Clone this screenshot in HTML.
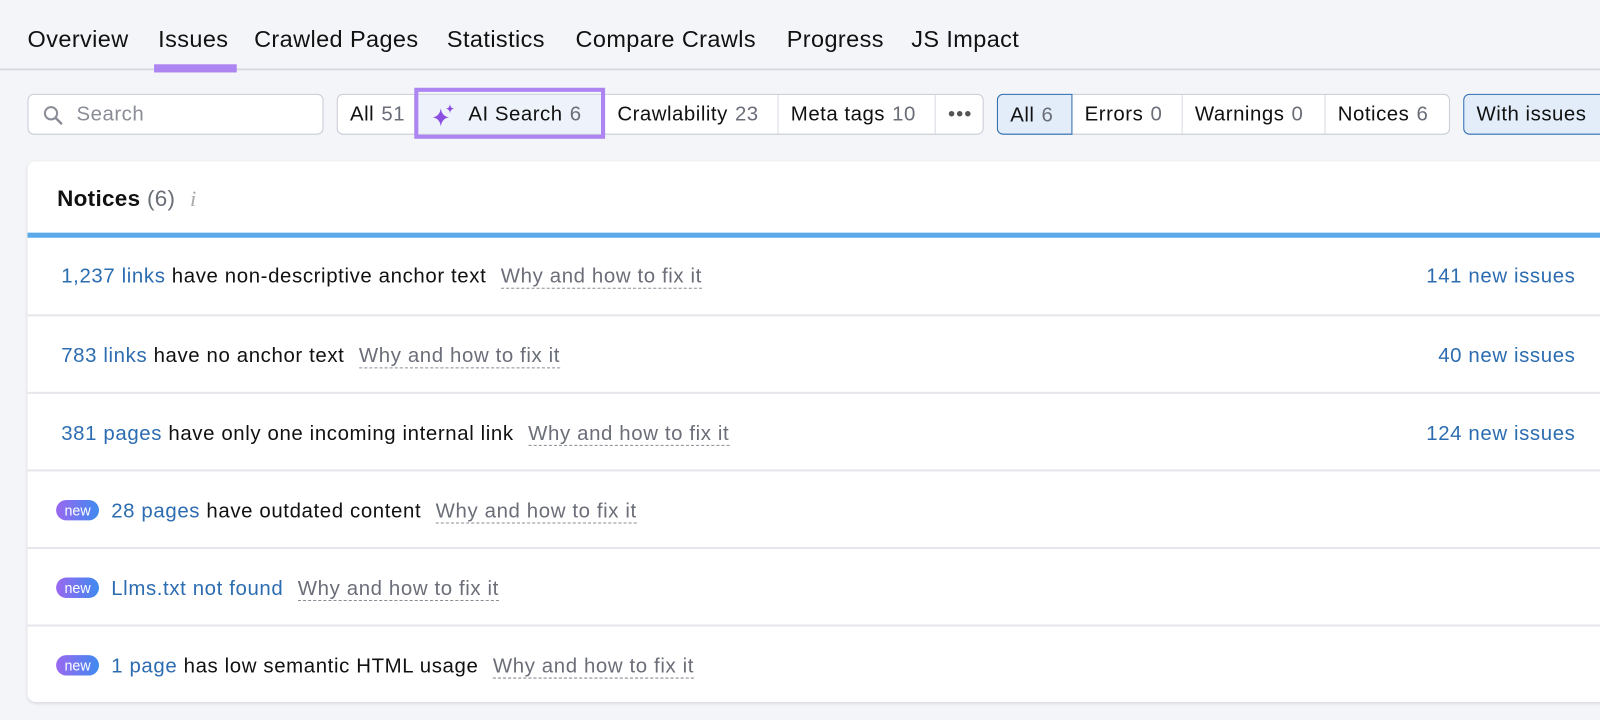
<!DOCTYPE html>
<html><head><style>
*{box-sizing:border-box;margin:0;padding:0}
body{width:1600px;height:720px;background:#f4f5f9;font-family:"Liberation Sans",sans-serif;color:#111;overflow:hidden}
#w{position:relative;width:1568px;height:706px;transform:scale(1.0204);transform-origin:0 0}
.tabs{position:absolute;top:25px;left:27px;font-size:23px;letter-spacing:.4px;white-space:nowrap}
.tabs span{position:absolute;top:0}
.line{position:absolute;top:67px;left:0;width:1600px;height:2px;background:#d8dae2}
.ul{position:absolute;top:63px;left:151px;width:81px;height:8px;background:#ad85f2}
.box{position:absolute;top:92px;height:40px;background:#fff;border:1px solid #c9ccd6;border-radius:6px;font-size:20px;letter-spacing:.5px}
.seg{position:absolute;top:0;height:38px;line-height:38px;padding:0 12px;border-right:1px solid #d8dae2;white-space:nowrap}
.n{color:#6b6e78;margin-left:7px}
.card{position:absolute;left:27px;top:158px;width:1600px;height:530px;background:#fff;border-radius:8px;box-shadow:0 1px 3px rgba(0,0,0,.12)}
.row{position:absolute;left:0;width:1600px;height:76px;border-top:2px solid #e6e7ec;font-size:20px;letter-spacing:.6px;line-height:78px;white-space:nowrap}
.a{color:#2c6cb0}
.w{color:#6b6e78;border-bottom:1.5px dashed #8a8d96;margin-left:8px;line-height:22px;display:inline-block}
.r{position:absolute;right:83px;top:0;color:#2c6cb0}
.new{display:inline-block;width:42px;height:20px;border-radius:10px;background:linear-gradient(90deg,#9a68f0,#3f8af0);color:#fff;font-size:14px;letter-spacing:0;line-height:20px;text-align:center;margin-right:12px;vertical-align:2px}
</style></head><body><div id="w">
<div class="tabs">
<span style="left:0">Overview</span><span style="left:128px">Issues</span><span style="left:222px">Crawled Pages</span><span style="left:411px">Statistics</span><span style="left:537px">Compare Crawls</span><span style="left:744px">Progress</span><span style="left:866px">JS Impact</span>
</div>
<div class="line"></div><div class="ul"></div>
<div class="box" style="left:27px;width:290px"><svg style="position:absolute;left:13px;top:9px" width="22" height="22" viewBox="0 0 22 22"><circle cx="9" cy="9" r="6" fill="none" stroke="#8a8d96" stroke-width="2"/><path d="M13.5 13.5L19 19" stroke="#8a8d96" stroke-width="2.4" stroke-linecap="round"/></svg><span style="position:absolute;left:47px;top:0;line-height:38px;color:#8a8d96">Search</span></div>
<div class="box" style="left:330px;width:634px">
<div class="seg" style="left:0;width:76px">All<span class="n">51</span></div>
<div class="seg" style="left:76px;width:186px;background:#eef3fb;padding-left:52px">AI Search<span class="n">6</span></div>
<div class="seg" style="left:262px;width:170px">Crawlability<span class="n">23</span></div>
<div class="seg" style="left:432px;width:154px">Meta tags<span class="n">10</span></div>
<div class="seg" style="left:586px;border:none;color:#555;letter-spacing:1px">•••</div>
</div>
<div style="position:absolute;left:406px;top:86px;width:187px;height:50px;border:4px solid #ad85f2"></div>
<svg style="position:absolute;left:422px;top:101px" width="26" height="24" viewBox="0 0 26 24"><path d="M10 5 Q11 13 18 14 Q11 15 10 23 Q9 15 2 14 Q9 13 10 5Z" fill="#8a4fe0"/><path d="M19 1 Q19.5 5 23 5.5 Q19.5 6 19 10 Q18.5 6 15 5.5 Q18.5 5 19 1Z" fill="#8a4fe0"/></svg>
<div class="box" style="left:977px;width:444px">
<div class="seg" style="left:-1px;top:-1px;height:40px;line-height:40px;background:#e3edfa;border:1px solid #2c6cb0;border-radius:6px 0 0 6px;width:74px">All<span class="n">6</span></div>
<div class="seg" style="left:73px;width:108px">Errors<span class="n">0</span></div>
<div class="seg" style="left:181px;width:140px">Warnings<span class="n">0</span></div>
<div class="seg" style="left:321px;border:none">Notices<span class="n">6</span></div>
</div>
<div class="box" style="left:1434px;width:200px;background:#e3edfa;border-color:#2c6cb0"><span style="position:absolute;left:12px;line-height:38px">With issues</span></div>
<div class="card">
<div style="position:absolute;left:29px;top:24px;font-size:22px;letter-spacing:.3px"><b>Notices</b> <span style="color:#6b6e78">(6)</span> <i style="color:#aaa;font-family:'Liberation Serif',serif;margin-left:8px">i</i></div>
<div style="position:absolute;left:0;top:70px;width:1600px;height:5px;background:#5aaaea"></div>
<div class="row" style="top:74px;border:none;padding-left:33px"><span class="a">1,237 links</span> have non-descriptive anchor text <span class="w">Why and how to fix it</span><span class="r">141 new issues</span></div>
<div class="row" style="top:150px;padding-left:33px"><span class="a">783 links</span> have no anchor text <span class="w">Why and how to fix it</span><span class="r">40 new issues</span></div>
<div class="row" style="top:226px;padding-left:33px"><span class="a">381 pages</span> have only one incoming internal link <span class="w">Why and how to fix it</span><span class="r">124 new issues</span></div>
<div class="row" style="top:302px;padding-left:28px"><span class="new">new</span><span class="a">28 pages</span> have outdated content <span class="w">Why and how to fix it</span></div>
<div class="row" style="top:378px;padding-left:28px"><span class="new">new</span><span class="a">Llms.txt not found</span> <span class="w">Why and how to fix it</span></div>
<div class="row" style="top:454px;padding-left:28px"><span class="new">new</span><span class="a">1 page</span> has low semantic HTML usage <span class="w">Why and how to fix it</span></div>
</div>
</div></body></html>
